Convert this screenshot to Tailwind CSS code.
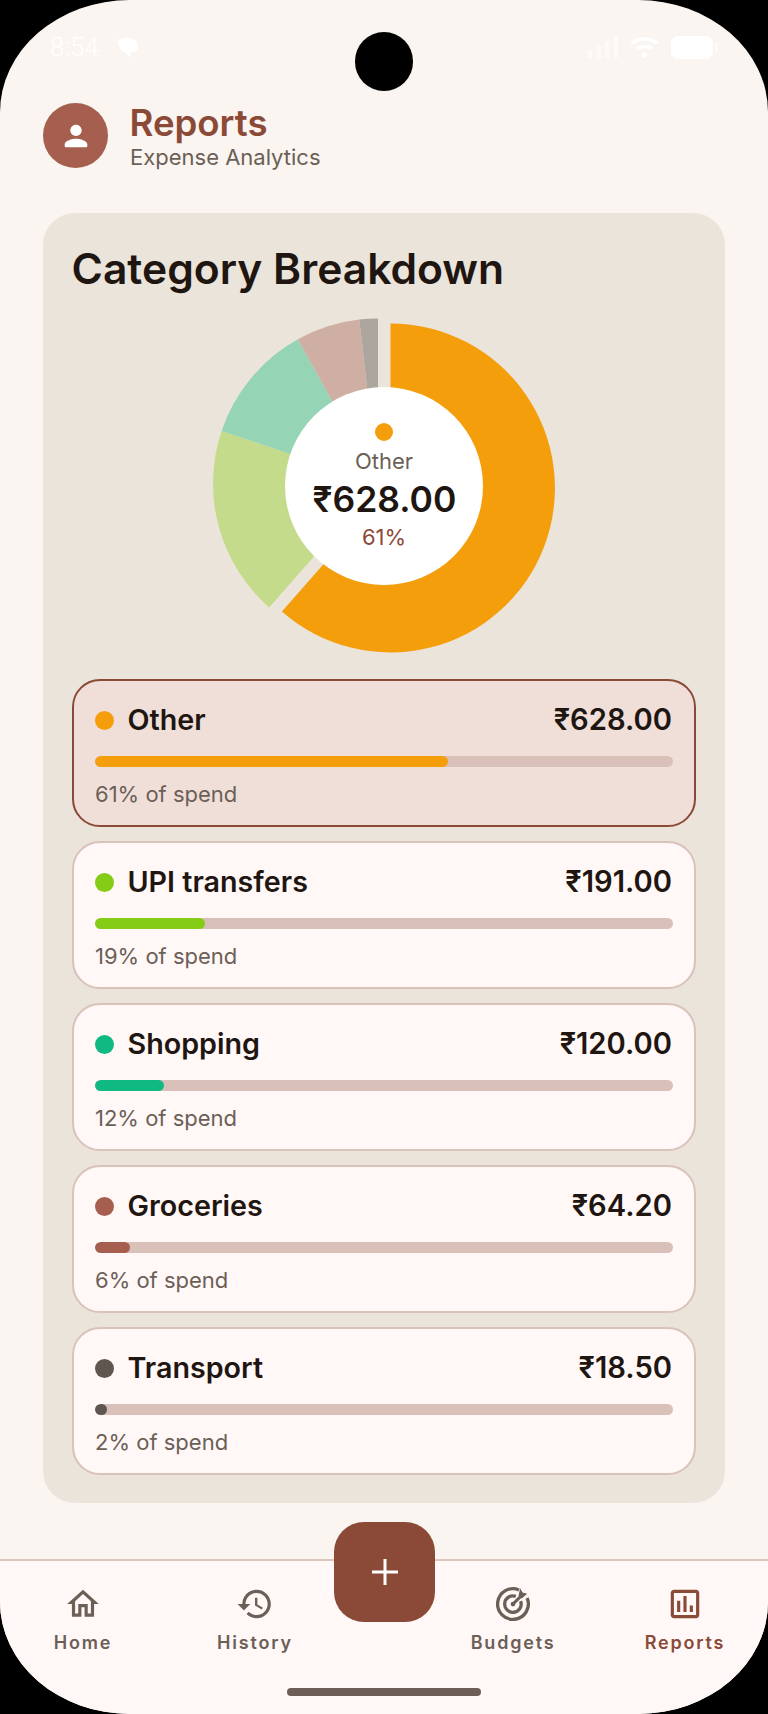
<!DOCTYPE html>
<html lang="en">
<head>
    <meta charset="UTF-8">
    <meta name="viewport" content="width=device-width, initial-scale=1.0">
    <title>Reports</title>
    <script src="https://cdn.jsdelivr.net/npm/@tailwindcss/browser@4"></script>
</head>
<body class="bg-black">
    <div class="relative w-[768px] h-[1714px] overflow-hidden rounded-[130px_/_112px] bg-[#FAF5F0] font-[Inter,sans-serif] flex flex-col">
        <!-- Status bar -->
        <div class="h-[103px] pl-[50px] pr-[50px] pt-[32px] flex items-start justify-between text-white">
            <div class="flex items-center gap-[18px] h-[30px]">
                <span class="font-[Roboto,sans-serif] text-[26px] leading-[30px] font-light">8:54</span>
                <svg class="w-[22px] h-[22px]" viewBox="0 0 22 22" fill="#fff"><ellipse cx="9" cy="7" rx="8" ry="5.500"/><ellipse cx="12" cy="10" rx="9.500" ry="7"/><path d="M8 15l5 7 1-6z"/></svg>
            </div>
            <div class="flex items-center gap-[12px] h-[30px]">
                <svg class="w-[30px] h-[22px]" viewBox="0 0 30 22" fill="#fff" fill-opacity="0.6"><rect x="0" y="14" width="4" height="8" rx="2"/><rect x="9" y="10" width="4" height="12" rx="2"/><rect x="17" y="5" width="4" height="17" rx="2"/><rect x="26" y="0" width="4" height="22" rx="2"/></svg>
                <svg class="w-[29px] h-[22px]" viewBox="0 0 29 22" fill="none" stroke="#fff" stroke-width="3.500"><path d="M1.500 7.500C9 1 20 1 27.500 7.500"/><path d="M7 13c4.500-3.500 10.500-3.500 15 0"/><circle cx="14.500" cy="19" r="2.500" fill="#fff" stroke="none"/></svg>
                <div class="flex items-center gap-[2px]">
                    <div class="w-[42px] h-[23px] rounded-[7px] bg-white"></div>
                    <div class="w-[3px] h-[10px] rounded-r bg-white/70"></div>
                </div>
            </div>
        </div>
        <!-- Camera -->
        <div class="absolute left-[355px] top-[32px] w-[58px] h-[59px] rounded-full bg-black"></div>

        <!-- Header -->
        <header class="h-[110px] px-[43px] flex items-start gap-[22px]">
            <div class="w-[65px] h-[65px] rounded-full bg-[#A65F4E] flex items-center justify-center">
                <svg class="w-[34px] h-[34px]" viewBox="0 0 24 24" fill="#fff"><path d="M12 12c2.210 0 4-1.790 4-4s-1.790-4-4-4-4 1.790-4 4 1.790 4 4 4zm0 2c-2.670 0-8 1.340-8 4v1c0 .55.45 1 1 1h14c.55 0 1-.45 1-1v-1c0-2.660-5.330-4-8-4z"/></svg>
            </div>
            <div class="flex flex-col">
                <h1 class="text-[36.600px] leading-[42px] -mt-[1px] -ml-[0.500px] font-[560] text-[#8B4A38]">Reports</h1>
                <p class="text-[22px] leading-[26px] text-[#6B5F57]">Expense Analytics</p>
            </div>
        </header>

        <!-- Category card -->
        <main class="mx-[43px] h-[1290px] rounded-[32px] bg-[#EBE4DA] px-[29px] pt-[28px] flex flex-col">
            <h2 class="text-[42.600px] leading-[56px] -ml-[0.500px] font-semibold text-[#1F1612]">Category Breakdown</h2>

            <div class="relative self-center w-[360px] h-[340px] mt-[19px] mb-[23px]">
                <svg class="w-[360px] h-[340px]" viewBox="204 316 360 340">
                    <path fill="#F59E0B" d="M390.500 488 L390.500 323.500 A164.500 164.500 0 1 1 281.900 611.600 Z"/>
                    <path fill="#C3DB8B" d="M378 483.500 L269.100 607.400 A165 165 0 0 1 221.600 430.900 Z"/>
                    <path fill="#95D4B5" d="M378 483.500 L221.600 430.900 A165 165 0 0 1 297.800 339.300 Z"/>
                    <path fill="#CFAFA3" d="M378 483.500 L297.800 339.300 A165 165 0 0 1 359.300 319.600 Z"/>
                    <path fill="#ACA69E" d="M378 483.500 L359.300 319.600 A165 165 0 0 1 378 318.500 Z"/>
                </svg>
                <div class="absolute left-[81px] top-[71px] w-[198px] h-[198px] rounded-full bg-white flex flex-col items-center pt-[36px]">
                    <div class="w-[18px] h-[18px] rounded-full bg-[#F59E0B]"></div>
                    <div class="mt-[6px] text-[22px] leading-[28px] text-[#6B5F57]">Other</div>
                    <div class="mt-[3px] ml-[1px] text-[35.500px] leading-[44px] font-semibold text-[#1F1612]">₹628.00</div>
                    <div class="mt-[2px] text-[22px] leading-[26px] text-[#8B4A38]">61%</div>
                </div>
            </div>

            <div class="flex flex-col gap-[14px]">
                <div class="h-[148px] rounded-[28px] border-2 border-[#8B4A38] bg-[#F0DFD9] px-[21px] pt-[19px]">
                    <div class="h-[40px] flex items-center justify-between">
                        <div class="flex items-center gap-[13.500px]">
                            <span class="w-[19px] h-[19px] rounded-full bg-[#F59E0B]"></span>
                            <span class="text-[28.700px] font-[570] text-[#1F1612]">Other</span>
                        </div>
                        <span class="text-[29.200px] font-[570] text-[#1F1612] mr-[1px]">₹628.00</span>
                    </div>
                    <div class="mt-[16px] h-[11px] rounded-full bg-[#D9C1BA] overflow-hidden"><div class="h-full w-[61%] rounded-full bg-[#F59E0B]"></div></div>
                    <div class="mt-[12px] text-[22px] leading-[30px] text-[#6B5F57]">61% of spend</div>
                </div>
                <div class="h-[148px] rounded-[28px] border-2 border-[#D9C2BA] bg-[#FFF8F6] px-[21px] pt-[19px]">
                    <div class="h-[40px] flex items-center justify-between">
                        <div class="flex items-center gap-[13.500px]">
                            <span class="w-[19px] h-[19px] rounded-full bg-[#84CC16]"></span>
                            <span class="text-[28.700px] font-[570] text-[#1F1612]">UPI transfers</span>
                        </div>
                        <span class="text-[29.200px] font-[570] text-[#1F1612] mr-[1px]">₹191.00</span>
                    </div>
                    <div class="mt-[16px] h-[11px] rounded-full bg-[#D9C1BA] overflow-hidden"><div class="h-full w-[19%] rounded-full bg-[#84CC16]"></div></div>
                    <div class="mt-[12px] text-[22px] leading-[30px] text-[#6B5F57]">19% of spend</div>
                </div>
                <div class="h-[148px] rounded-[28px] border-2 border-[#D9C2BA] bg-[#FFF8F6] px-[21px] pt-[19px]">
                    <div class="h-[40px] flex items-center justify-between">
                        <div class="flex items-center gap-[13.500px]">
                            <span class="w-[19px] h-[19px] rounded-full bg-[#10B981]"></span>
                            <span class="text-[28.700px] font-[570] text-[#1F1612]">Shopping</span>
                        </div>
                        <span class="text-[29.200px] font-[570] text-[#1F1612] mr-[1px]">₹120.00</span>
                    </div>
                    <div class="mt-[16px] h-[11px] rounded-full bg-[#D9C1BA] overflow-hidden"><div class="h-full w-[12%] rounded-full bg-[#10B981]"></div></div>
                    <div class="mt-[12px] text-[22px] leading-[30px] text-[#6B5F57]">12% of spend</div>
                </div>
                <div class="h-[148px] rounded-[28px] border-2 border-[#D9C2BA] bg-[#FFF8F6] px-[21px] pt-[19px]">
                    <div class="h-[40px] flex items-center justify-between">
                        <div class="flex items-center gap-[13.500px]">
                            <span class="w-[19px] h-[19px] rounded-full bg-[#A65F4E]"></span>
                            <span class="text-[28.700px] font-[570] text-[#1F1612]">Groceries</span>
                        </div>
                        <span class="text-[29.200px] font-[570] text-[#1F1612] mr-[1px]">₹64.20</span>
                    </div>
                    <div class="mt-[16px] h-[11px] rounded-full bg-[#D9C1BA] overflow-hidden"><div class="h-full w-[6%] rounded-full bg-[#A65F4E]"></div></div>
                    <div class="mt-[12px] text-[22px] leading-[30px] text-[#6B5F57]">6% of spend</div>
                </div>
                <div class="h-[148px] rounded-[28px] border-2 border-[#D9C2BA] bg-[#FFF8F6] px-[21px] pt-[19px]">
                    <div class="h-[40px] flex items-center justify-between">
                        <div class="flex items-center gap-[13.500px]">
                            <span class="w-[19px] h-[19px] rounded-full bg-[#5F564F]"></span>
                            <span class="text-[28.700px] font-[570] text-[#1F1612]">Transport</span>
                        </div>
                        <span class="text-[29.200px] font-[570] text-[#1F1612] mr-[1px]">₹18.50</span>
                    </div>
                    <div class="mt-[16px] h-[11px] rounded-full bg-[#D9C1BA] overflow-hidden"><div class="h-full w-[2%] rounded-full bg-[#5F564F]"></div></div>
                    <div class="mt-[12px] text-[22px] leading-[30px] text-[#6B5F57]">2% of spend</div>
                </div>
            </div>
        </main>

        <!-- Bottom nav -->
        <nav class="mt-[56px] flex-1 border-t-2 border-[#DCC6BE] bg-[#FFF8F6] px-[23px] pt-[24px] flex justify-between items-start">
            <a class="w-[120px] flex flex-col items-center text-[#6B5F57]">
                <svg class="w-[38px] h-[38px]" viewBox="0 0 24 24" fill="currentColor"><path d="M12 5.690l5 4.500V18h-2v-6H9v6H7v-7.810l5-4.500M12 3L2 12h3v8h6v-6h2v6h6v-8h3L12 3z"/></svg>
                <span class="mt-[8px] text-[18px] leading-[24px] font-semibold tracking-[1.800px]">Home</span>
            </a>
            <a class="w-[120px] flex flex-col items-center text-[#6B5F57]">
                <svg class="w-[38px] h-[38px]" viewBox="0 0 24 24" fill="currentColor"><path d="M13 3c-4.970 0-9 4.030-9 9H1l3.890 3.890.07.140L9 12H6c0-3.870 3.130-7 7-7s7 3.130 7 7-3.130 7-7 7c-1.930 0-3.680-.79-4.940-2.060l-1.420 1.420C8.270 19.990 10.510 21 13 21c4.970 0 9-4.030 9-9s-4.030-9-9-9zm-1 5v5l4.280 2.540.72-1.210-3.500-2.080V8H12z"/></svg>
                <span class="mt-[8px] text-[18px] leading-[24px] font-semibold tracking-[1.800px]">History</span>
            </a>
            <div class="w-[34px]"></div>
            <a class="w-[120px] flex flex-col items-center text-[#6B5F57]">
                <svg class="w-[38px] h-[38px]" viewBox="0 0 24 24" fill="none" stroke="currentColor" stroke-width="2.100"><path d="M15.800 3.100A9.700 9.700 0 1 0 20.900 8.200"/><path d="M13.800 7.200A5.200 5.200 0 1 0 16.800 10.200"/><circle cx="12" cy="12" r="1.500" fill="currentColor" stroke="none"/><path d="M12 12l5.500-5.500" stroke-width="2"/><path d="M15.500 6.800l1-4.800 1.500 2.800 3 .8-3.500 3z" fill="currentColor" stroke="none"/></svg>
                <span class="mt-[8px] text-[18px] leading-[24px] font-semibold tracking-[1.800px]">Budgets</span>
            </a>
            <a class="w-[120px] flex flex-col items-center text-[#8B4A38]">
                <svg class="w-[38px] h-[38px]" viewBox="0 0 24 24" fill="currentColor"><path d="M19 3H5c-1.100 0-2 .9-2 2v14c0 1.100.9 2 2 2h14c1.100 0 2-.9 2-2V5c0-1.100-.9-2-2-2zm0 16H5V5h14v14zM7 10h2v7H7zm4-3h2v10h-2zm4 6h2v4h-2z"/></svg>
                <span class="mt-[8px] text-[18px] leading-[24px] font-semibold tracking-[1.800px]">Reports</span>
            </a>
        </nav>

        <!-- Add button -->
        <button class="absolute left-[334px] top-[1522px] w-[101px] h-[100px] rounded-[30px] bg-[#8B4A38] flex items-center justify-center">
            <svg class="w-[26px] h-[26px]" viewBox="0 0 26 26" stroke="#fff" stroke-width="3"><path d="M13 0v26M0 13h26"/></svg>
        </button>

        <!-- Home indicator -->
        <div class="absolute left-[287px] top-[1688px] w-[194px] h-[8px] rounded-full bg-[#6B5F57]"></div>
    </div>
</body>
</html>
